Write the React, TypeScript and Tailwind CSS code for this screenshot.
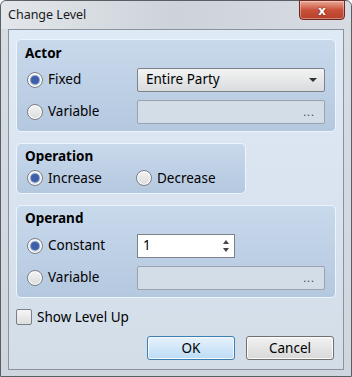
import React from "react";

function Radio({ checked }: { checked?: boolean }) {
	return (
		<span className="flex h-[16px] w-[16px] items-center justify-center rounded-full border border-[#7a7f87] bg-gradient-to-b from-[#f4f4f4] to-[#dcdcdc] shadow-[inset_0_0_0_1px_#ffffff]">
			{checked && (
				<span className="h-[8px] w-[8px] rounded-full bg-[#3c5fa8] shadow-[0_0_0_1px_#8aa4d4]" />
			)}
		</span>
	);
}

function RadioLabel({ checked, label, className = "" }: { checked?: boolean; label: string; className?: string }) {
	return (
		<div className={"flex items-center gap-[5px] " + className}>
			<Radio checked={checked} />
			<span className="text-[13.5px] text-black">{label}</span>
		</div>
	);
}

function Group({ title, className = "", children }: { title: string; className?: string; children: React.ReactNode }) {
	return (
		<div
			className={
				"rounded-[5px] border border-[#eef4fb] bg-gradient-to-b from-[#c9d9ec] to-[#b4c8df] pl-[8px] " +
				className
			}
		>
			<div className="text-[13.5px] font-bold leading-none text-black">{title}</div>
			{children}
		</div>
	);
}

function PickField() {
	return (
		<div className="flex h-[24px] w-[188px] items-center justify-end rounded-[2px] border border-[#9aa3ad] bg-[#d3dde8] pr-[9px]">
			<span className="text-[11px] leading-none tracking-[1px] text-[#444]">...</span>
		</div>
	);
}

export default function App() {
	return (
		<div
			className="flex h-[377px] w-[352px] flex-col rounded-t-[6px] border border-[#5a5f66] bg-gradient-to-b from-[#d7dde3] to-[#cfd6de]"
			style={{ fontFamily: '"Noto Sans", "Open Sans", sans-serif' }}
		>
			{/* title bar */}
			<div className="relative flex h-[28px] shrink-0 items-center rounded-t-[6px] bg-gradient-to-r from-[#e3e7eb] via-[#cdd3da] to-[#d7dce2] pl-[7px]">
				<span className="text-[12.5px] text-[#1a1a1a]">Change Level</span>
				<div className="absolute right-[6px] top-[-1px] flex h-[20px] w-[46px] items-center justify-center rounded-b-[4px] border border-[#6e2a22] bg-gradient-to-b from-[#e8a898] via-[#c9513b] to-[#b8412c] shadow-[inset_0_0_0_1px_rgba(255,255,255,0.35)]">
					<span className="text-[13px] font-bold leading-none text-white [text-shadow:0_0_2px_#5a1a10]">x</span>
				</div>
			</div>

			{/* client area */}
			<div className="mx-[7px] mb-[6px] flex flex-1 flex-col border border-[#8a939d] bg-gradient-to-b from-[#dfeaf7] to-[#d3dde8] px-[7px] pt-[9px]">
				<Group title="Actor" className="h-[93px] pt-[7px]">
					<div className="mt-[7px] flex items-center justify-between pr-[10px]">
						<RadioLabel checked label="Fixed" className="ml-[2px]" />
						<div className="flex h-[24px] w-[188px] items-center justify-between rounded-[2px] border border-[#7d838a] bg-gradient-to-b from-[#f3f3f3] to-[#d9dbde] pl-[8px] pr-[7px]">
							<span className="text-[13.5px] text-black">Entire Party</span>
							<span className="h-0 w-0 border-x-[4px] border-t-[4px] border-x-transparent border-t-[#333]" />
						</div>
					</div>
					<div className="mt-[8px] flex items-center justify-between pr-[10px]">
						<RadioLabel label="Variable" className="ml-[2px]" />
						<PickField />
					</div>
				</Group>

				<Group title="Operation" className="mt-[11px] h-[51px] w-[230px] pt-[6px]">
					<div className="mt-[4px] flex items-center">
						<RadioLabel checked label="Increase" className="ml-[2px] w-[109px]" />
						<RadioLabel label="Decrease" />
					</div>
				</Group>

				<Group title="Operand" className="mt-[11px] h-[93px] pt-[6px]">
					<div className="mt-[8px] flex items-center pr-[10px]">
						<RadioLabel checked label="Constant" className="ml-[2px] w-[110px]" />
						<div className="flex h-[24px] w-[98px] items-center justify-between border border-[#7d838a] bg-white pl-[5px] pr-[5px]">
							<span className="text-[13.5px] text-black">1</span>
							<div className="flex flex-col gap-[4px]">
								<span className="h-0 w-0 border-x-[3.5px] border-b-[4px] border-x-transparent border-b-[#444]" />
								<span className="h-0 w-0 border-x-[3.5px] border-t-[4px] border-x-transparent border-t-[#444]" />
							</div>
						</div>
					</div>
					<div className="mt-[8px] flex items-center justify-between pr-[10px]">
						<RadioLabel label="Variable" className="ml-[2px]" />
						<PickField />
					</div>
				</Group>

				<div className="mt-[9px] flex items-center gap-[5px]">
					<span className="h-[16px] w-[16px] rounded-[2px] border border-[#7a7f87] bg-gradient-to-b from-[#f6f6f6] to-[#dedede]" />
					<span className="text-[13.5px] text-black">Show Level Up</span>
				</div>

				<div className="mt-[9px] flex justify-end gap-[11px] pr-[2px]">
					<button className="flex h-[24px] w-[88px] items-center justify-center rounded-[3px] border border-[#3c7fb1] bg-gradient-to-b from-[#e6f2fc] to-[#bcdcf5] text-[13.5px] text-black shadow-[inset_0_0_0_1px_#f4faff]">
						OK
					</button>
					<button className="flex h-[24px] w-[88px] items-center justify-center rounded-[3px] border border-[#707070] bg-gradient-to-b from-[#f2f2f2] to-[#d8d8d8] text-[13.5px] text-black shadow-[inset_0_0_0_1px_#fbfbfb]">
						Cancel
					</button>
				</div>
			</div>
		</div>
	);
}
